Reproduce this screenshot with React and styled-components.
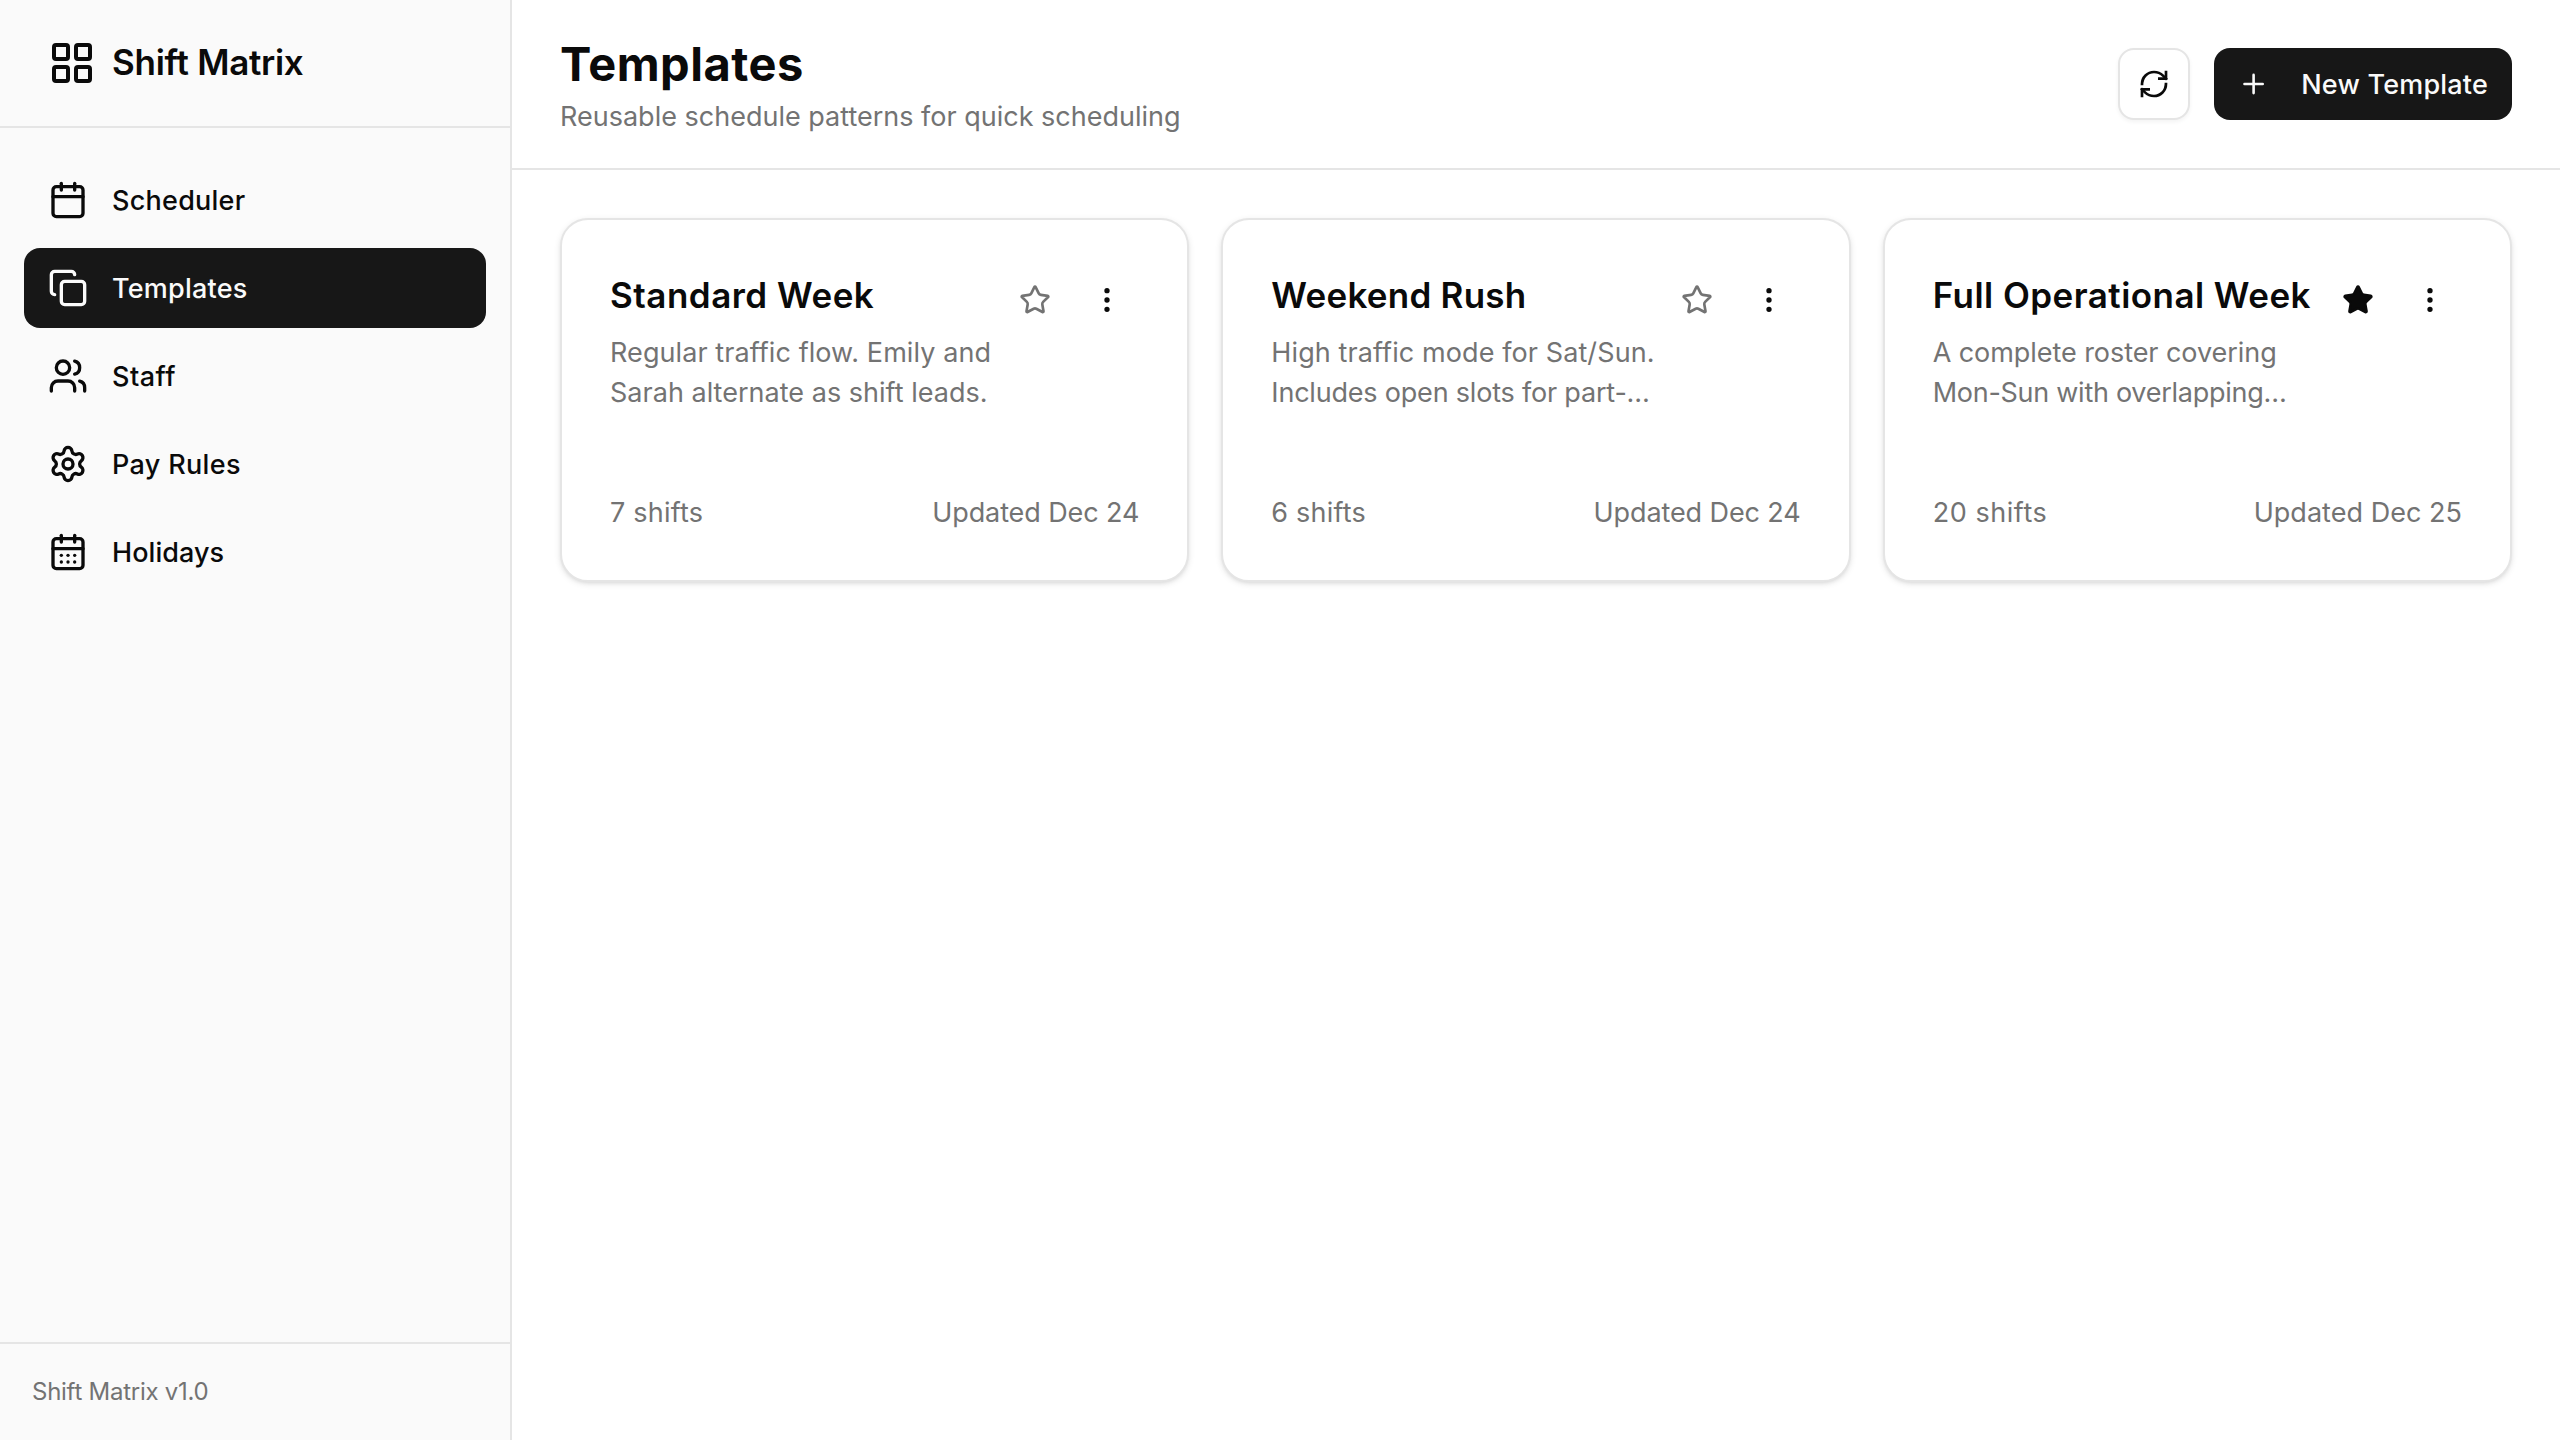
import styled, { createGlobalStyle } from "styled-components";
import {
  Calendar,
  CalendarDays,
  Copy,
  EllipsisVertical,
  LayoutGrid,
  Plus,
  RefreshCw,
  Settings,
  Star,
  Users,
} from "lucide-react";

const GlobalStyle = createGlobalStyle`
  * {
    box-sizing: border-box;
    margin: 0;
    padding: 0;
  }
  body {
    font-family: Inter, "Liberation Sans", sans-serif;
    color: #0a0a0a;
    background: #fff;
    -webkit-font-smoothing: antialiased;
  }
  button {
    font: inherit;
    color: inherit;
    border: none;
    background: none;
  }
`;

const Container = styled.div`
  display: flex;
  height: 100vh;
`;

const Sidebar = styled.aside`
  display: flex;
  flex-direction: column;
  flex-shrink: 0;
  width: 512px;
  background: #fafafa;
  border-right: 2px solid #e5e5e5;
`;
const Brand = styled.div`
  display: flex;
  align-items: center;
  gap: 16px;
  height: 128px;
  padding: 0 48px;
  border-bottom: 2px solid #e5e5e5;
`;
const BrandName = styled.span`
  padding-bottom: 2px;
  font-size: 35px;
  font-weight: 600;
  letter-spacing: -0.28px;
`;
const Nav = styled.nav`
  display: flex;
  flex: 1;
  flex-direction: column;
  gap: 8px;
  padding: 32px 24px;
`;
const NavItem = styled.a`
  display: flex;
  align-items: center;
  gap: 24px;
  height: 80px;
  padding: 0 24px;
  border-radius: 16px;
  font-size: 27px;
  font-weight: 500;
  letter-spacing: ${(props) => props.$tracking || 0}px;
  color: ${(props) => (props.$active ? "#fafafa" : "#0a0a0a")};
  background: ${(props) => (props.$active ? "#171717" : "transparent")};
`;
const SidebarFooter = styled.div`
  padding: 32px;
  border-top: 2px solid #e5e5e5;
  color: #737373;
  font-size: 24px;
  line-height: 32px;
  letter-spacing: -0.26px;
`;

const Main = styled.main`
  flex: 1;
  min-width: 0;
`;
const Header = styled.header`
  display: flex;
  align-items: center;
  justify-content: space-between;
  height: 170px;
  padding: 0 48px;
  border-bottom: 2px solid #e5e5e5;
`;
const Title = styled.h1`
  font-size: 47px;
  font-weight: 700;
  line-height: 64px;
  letter-spacing: 0.5px;
`;
const Subtitle = styled.p`
  margin: 1px 0 -1px;
  color: #737373;
  font-size: 27px;
  line-height: 40px;
`;
const Actions = styled.div`
  display: flex;
  gap: 24px;
`;
const RefreshButton = styled.button`
  display: flex;
  align-items: center;
  justify-content: center;
  width: 72px;
  height: 72px;
  border: 2px solid #e5e5e5;
  border-radius: 16px;
  background: #fff;
  box-shadow: 0 2px 4px rgba(0, 0, 0, 0.05);
`;
const NewButton = styled.button`
  display: flex;
  align-items: center;
  gap: 32px;
  width: 298px;
  height: 72px;
  padding: 0 24px;
  border-radius: 16px;
  background: #171717;
  color: #fafafa;
  font-size: 27px;
  font-weight: 500;
  letter-spacing: 0.2px;
  white-space: nowrap;
`;

const Grid = styled.div`
  display: grid;
  grid-template-columns: repeat(3, 1fr);
  gap: 32px;
  padding: 48px;
`;
const Card = styled.article`
  display: flex;
  flex-direction: column;
  justify-content: space-between;
  height: 364px;
  padding: 48px;
  border: 2px solid #e5e5e5;
  border-radius: 28px;
  background: #fff;
  box-shadow: 0 2px 6px rgba(0, 0, 0, 0.1), 0 2px 4px -2px rgba(0, 0, 0, 0.1);
`;
const CardTop = styled.div`
  display: flex;
  align-items: flex-start;
  justify-content: space-between;
`;
const CardTitle = styled.h2`
  margin-bottom: 11px;
  font-size: 35px;
  font-weight: 600;
  line-height: 54px;
  letter-spacing: ${(props) => props.$tracking}px;
  white-space: nowrap;
`;
const CardLine = styled.p`
  color: #737373;
  font-size: 27px;
  line-height: 40px;
  letter-spacing: ${(props) => props.$tracking}px;
  white-space: nowrap;
`;
const CardActions = styled.div`
  display: flex;
  gap: 8px;
`;
const IconButton = styled.button`
  display: flex;
  align-items: center;
  justify-content: center;
  width: 64px;
  height: 64px;
  color: ${(props) => (props.$muted ? "#737373" : "#0a0a0a")};
`;
const CardBottom = styled.div`
  display: flex;
  justify-content: space-between;
  margin-bottom: -1px;
  color: #737373;
  font-size: 27px;
  line-height: 40px;
`;
const Shifts = styled.span`
  letter-spacing: ${(props) => props.$tracking}px;
`;
const Updated = styled.span`
  letter-spacing: ${(props) => props.$tracking}px;
`;

const navItems = [
  { label: "Scheduler", icon: Calendar, tracking: 0.25 },
  { label: "Templates", icon: Copy, active: true, tracking: 0.22 },
  { label: "Staff", icon: Users, tracking: 0.5 },
  { label: "Pay Rules", icon: Settings, tracking: 0.34 },
  { label: "Holidays", icon: CalendarDays, tracking: 0.06 },
];

const templates = [
  {
    name: "Standard Week",
    tracking: 0.5,
    lines: [
      { text: "Regular traffic flow. Emily and", tracking: 0.08 },
      { text: "Sarah alternate as shift leads.", tracking: 0.02 },
    ],
    shifts: { count: 7, tracking: 0.22 },
    updated: { date: "Dec 24", tracking: -0.1 },
  },
  {
    name: "Weekend Rush",
    tracking: 0.25,
    lines: [
      { text: "High traffic mode for Sat/Sun.", tracking: 0.1 },
      { text: "Includes open slots for part-…", tracking: -0.2 },
    ],
    shifts: { count: 6, tracking: 0.22 },
    updated: { date: "Dec 24", tracking: -0.1 },
  },
  {
    name: "Full Operational Week",
    tracking: 0.46,
    lines: [
      { text: "A complete roster covering", tracking: -0.06 },
      { text: "Mon-Sun with overlapping…", tracking: -0.27 },
    ],
    shifts: { count: 20, tracking: 0.55 },
    updated: { date: "Dec 25", tracking: 0.03 },
    starred: true,
  },
];

const App = () => {
  return (
    <Container>
      <GlobalStyle />
      <Sidebar>
        <Brand>
          <LayoutGrid size={48} />
          <BrandName>Shift Matrix</BrandName>
        </Brand>
        <Nav>
          {navItems.map(({ label, icon: Icon, active, tracking }) => (
            <NavItem key={label} $active={active} $tracking={tracking}>
              <Icon size={40} />
              {label}
            </NavItem>
          ))}
        </Nav>
        <SidebarFooter>Shift Matrix v1.0</SidebarFooter>
      </Sidebar>
      <Main>
        <Header>
          <div>
            <Title>Templates</Title>
            <Subtitle>Reusable schedule patterns for quick scheduling</Subtitle>
          </div>
          <Actions>
            <RefreshButton>
              <RefreshCw size={32} strokeLinecap="square" strokeLinejoin="miter" />
            </RefreshButton>
            <NewButton>
              <Plus size={32} />
              New Template
            </NewButton>
          </Actions>
        </Header>
        <Grid>
          {templates.map((item) => (
            <Card key={item.name}>
              <CardTop>
                <div>
                  <CardTitle $tracking={item.tracking}>{item.name}</CardTitle>
                  {item.lines.map((line) => (
                    <CardLine key={line.text} $tracking={line.tracking}>
                      {line.text}
                    </CardLine>
                  ))}
                </div>
                <CardActions>
                  <IconButton $muted={!item.starred}>
                    <Star size={32} fill={item.starred ? "currentColor" : "none"} />
                  </IconButton>
                  <IconButton>
                    <EllipsisVertical size={32} />
                  </IconButton>
                </CardActions>
              </CardTop>
              <CardBottom>
                <Shifts $tracking={item.shifts.tracking}>{item.shifts.count} shifts</Shifts>
                <Updated $tracking={item.updated.tracking}>Updated {item.updated.date}</Updated>
              </CardBottom>
            </Card>
          ))}
        </Grid>
      </Main>
    </Container>
  );
};

export default App;
